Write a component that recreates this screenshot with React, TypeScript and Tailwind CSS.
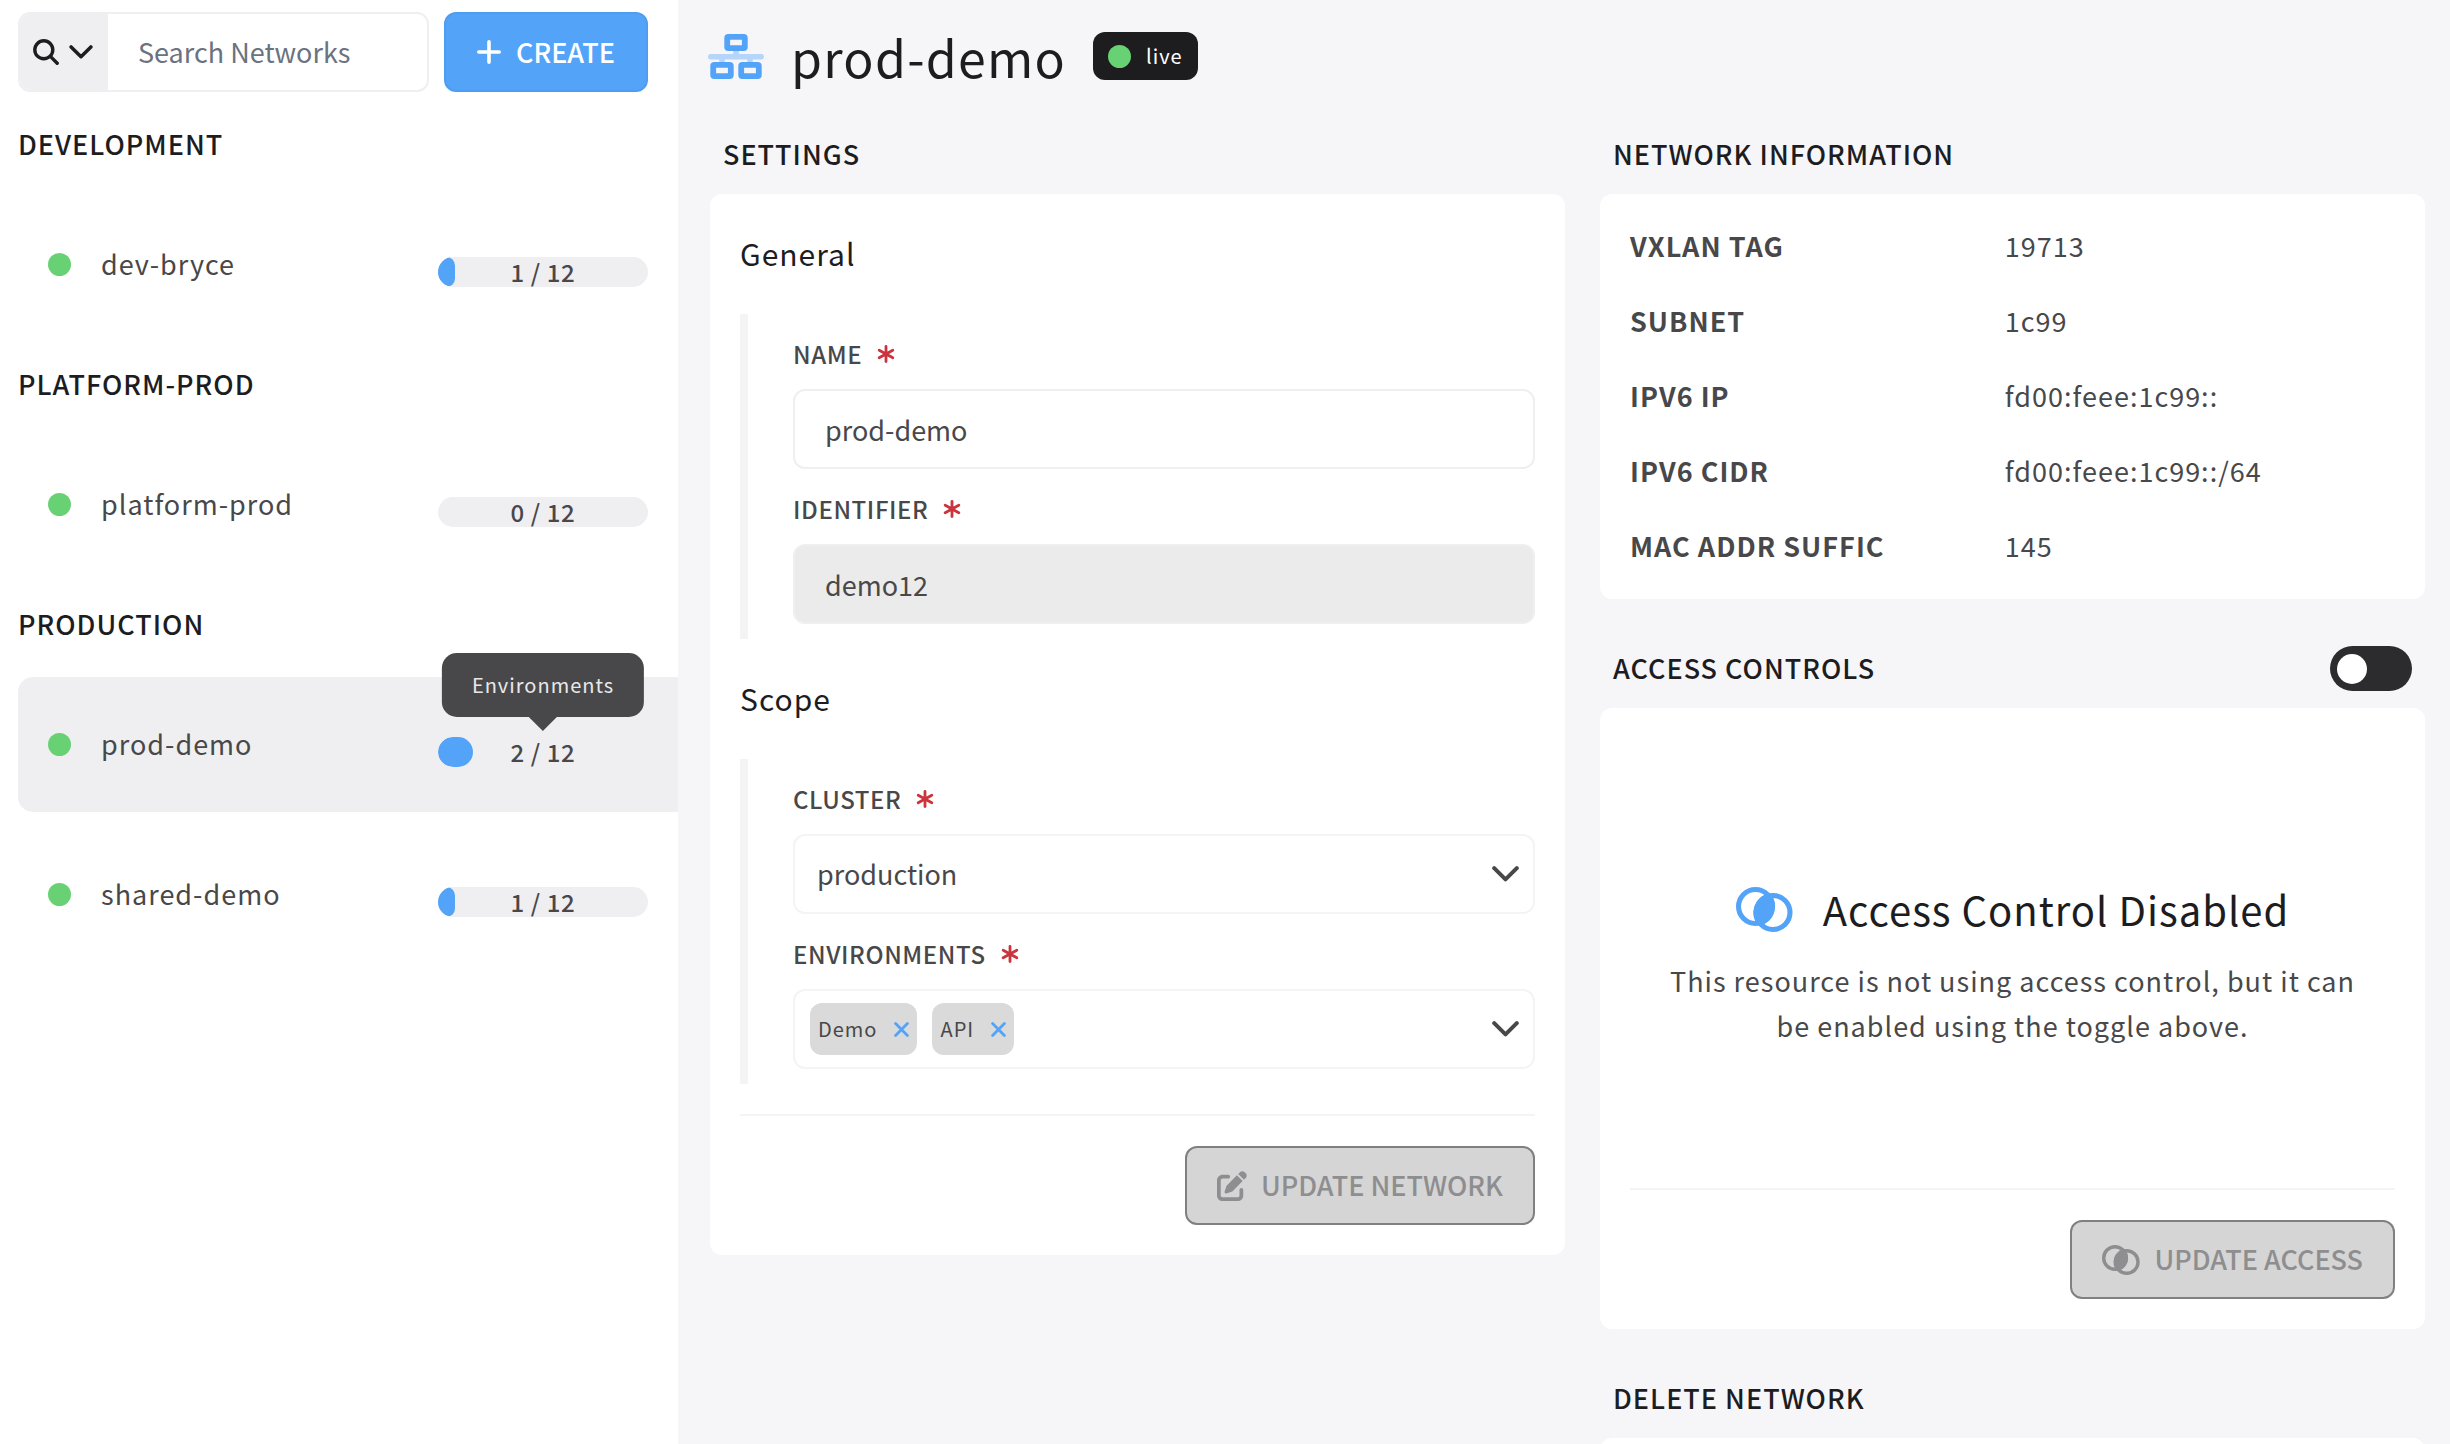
import { useState } from "react";
import type { ReactNode } from "react";
import { FaPenToSquare } from "react-icons/fa6";

interface Network {
    name: string
    used: number
    tooltip?: string
}

const MAX_ENVS = 12

const groups: { title: string, networks: Network[] }[] = [
    { title: "Development", networks: [{ name: "dev-bryce", used: 1 }] },
    { title: "Platform-Prod", networks: [{ name: "platform-prod", used: 0 }] },
    {
        title: "Production",
        networks: [
            { name: "prod-demo", used: 2, tooltip: "Environments" },
            { name: "shared-demo", used: 1 }
        ]
    }
]

const info = [
    ["VXLAN Tag", "19713"],
    ["Subnet", "1c99"],
    ["IPv6 IP", "fd00:feee:1c99::"],
    ["IPv6 CIDR", "fd00:feee:1c99::/64"],
    ["MAC Addr Suffic", "145"]
]

// icons
const SearchIcon = () => <svg className="size-[26px]" viewBox="0 0 26 26" fill="none" stroke="currentColor" strokeWidth="3.4" strokeLinecap="round">
    <circle cx="10.8" cy="10.8" r="9" />
    <path d="M17.4 17.4 24.2 24.2" />
</svg>

const ChevronIcon = ({ className }: { className: string }) => <svg className={className} viewBox="0 0 27 16" fill="none" stroke="currentColor" strokeWidth="4" strokeLinecap="round" strokeLinejoin="round">
    <path d="M2.2 2.2 13.5 13.4 24.8 2.2" />
</svg>

const PlusIcon = () => <svg className="size-[24px]" viewBox="0 0 24 24" fill="none" stroke="currentColor" strokeWidth="3.6" strokeLinecap="round">
    <path d="M12 1.8v20.4M1.8 12h20.4" />
</svg>

const CloseIcon = () => <svg className="size-[15px]" viewBox="0 0 15 15" fill="none" stroke="currentColor" strokeWidth="2.8" strokeLinecap="round">
    <path d="M1.6 1.6 13.4 13.4M13.4 1.6 1.6 13.4" />
</svg>

const RequiredIcon = () => <svg className="size-[18px] text-[#cb343c]" viewBox="0 0 18 18" fill="none" stroke="currentColor" strokeWidth="2.8" strokeLinecap="round">
    <path d="M9 1.4v15.2M2.2 5.2l13.6 7.6M15.8 5.2 2.2 12.8" />
</svg>

const NetworkIcon = () => <svg className="h-[45px] w-[56px] shrink-0" viewBox="0 0 56 45" fill="none">
    <path d="M2.8 22.7h50.4M28 15v8M14 22.7V30M42 22.7V30" stroke="#b5d6fa" strokeWidth="5.6" strokeLinecap="round" />
    <g stroke="#53a4f8" strokeWidth="5.8">
        <rect x="19.2" y="2.9" width="17.6" height="11.2" rx="1.2" />
        <rect x="5.2" y="30.9" width="17.6" height="11.2" rx="1.2" />
        <rect x="33.2" y="30.9" width="17.6" height="11.2" rx="1.2" />
    </g>
</svg>

const AccessIcon = ({ className }: { className: string }) => <svg className={className} viewBox="0 0 38 30" fill="none">
    <circle cx="13" cy="13" r="11.3" stroke="currentColor" strokeWidth="3.4" />
    <circle cx="24.7" cy="17" r="11.3" stroke="currentColor" strokeWidth="3.4" />
    <path d="M22.54 4.17A13 13 0 0 1 15.12 25.83 13 13 0 0 1 22.54 4.17Z" fill="currentColor" />
</svg>

const Dot = () => <span className="size-[23px] shrink-0 rounded-full bg-[#67d173]" />

const UsageBar = ({ used, tooltip }: { used: number, tooltip?: string }) => <div className="relative mt-[15px] grid w-[210px] items-center">
    <div className="col-start-1 row-start-1 h-[30px] overflow-hidden rounded-full bg-[#efeff1]">
        <div className="h-full rounded-full bg-[#53a4f8]" style={{ width: `${used / MAX_ENVS * 100}%` }} />
    </div>
    <span className="z-10 col-start-1 row-start-1 text-center text-[24px] leading-[30px] font-medium tracking-wide">{`${used} / ${MAX_ENVS}`}</span>
    {tooltip && <div role="tooltip" className="absolute bottom-full left-1/2 z-20 mb-[20px] -translate-x-1/2 rounded-[15px] bg-[#48484a] px-[30px] text-[20px] leading-[64px] tracking-wider text-[#e8e8ea]">
        {tooltip}
        <svg className="absolute top-full left-1/2 h-[14px] w-[28px] -translate-x-1/2" viewBox="0 0 28 14">
            <path d="M0 0h28L14 14Z" fill="#48484a" />
        </svg>
    </div>}
</div>

const Sidebar = ({ active, onSelect }: { active: string, onSelect: (name: string) => void }) => <aside className="w-[678px] shrink-0 bg-white pt-3 pl-[18px]">
    <div className="flex gap-[15px] pr-[30px]">
        <div className="flex h-[80px] min-w-0 flex-1 overflow-hidden rounded-[12px] border-2 border-[#efeff1]">
            <button aria-label="Search type" className="flex w-[88px] shrink-0 items-center gap-[10px] bg-[#efeff1] pl-[13px] text-[#1d1d1f]">
                <SearchIcon />
                <ChevronIcon className="h-[14px] w-[24px]" />
            </button>
            <input type="search" aria-label="Search Networks" placeholder="Search Networks" className="min-w-0 flex-1 px-[30px] outline-none placeholder:text-[#6b7280]" />
        </div>
        <button className="flex h-[80px] items-center gap-[15px] rounded-[12px] border-2 border-[#4f9df0] bg-[#53a4f8] px-[31px] font-medium text-white uppercase">
            <PlusIcon />
            Create
        </button>
    </div>
    {groups.map(group => <section key={group.title}>
        <h2 className="pt-[29px] pb-[31px] leading-[45px] font-medium tracking-[1px] text-[#1d1d1f] uppercase">{group.title}</h2>
        <ul className="flex flex-col gap-[15px]">
            {group.networks.map(network => <li key={network.name}>
                <a
                    href={`#${network.name}`}
                    onClick={() => onSelect(network.name)}
                    className={`flex h-[135px] items-center gap-[30px] rounded-l-[15px] px-[30px] ${active === network.name ? "bg-[#efeff1]" : ""}`}
                >
                    <Dot />
                    <span className="flex-1 tracking-[1px]">{network.name}</span>
                    <UsageBar used={network.used} tooltip={network.tooltip} />
                </a>
            </li>)}
        </ul>
    </section>)}
</aside>

const SectionTitle = ({ title, children }: { title: string, children?: ReactNode }) => <div className="flex items-center justify-between px-[13px] py-[17px]">
    <h2 className="pb-[2px] leading-[43px] font-medium tracking-[1px] text-[#1d1d1f] uppercase">{title}</h2>
    {children}
</div>

const Fieldset = ({ title, children }: { title: string, children: ReactNode }) => <section>
    <h3 className="pt-[29px] pb-[31px] text-[30px] leading-[60px] tracking-[1px] text-[#1d1d1f]">{title}</h3>
    <div className="border-l-8 border-[#f4f4f5] pb-[15px] pl-[45px]">{children}</div>
</section>

const Field = ({ id, label, children }: { id: string, label: string, children: ReactNode }) => <div>
    <label htmlFor={id} className="flex items-center gap-[15px] pt-[23px] pb-[19px] text-[24px] leading-[33px] font-medium tracking-wide uppercase">
        {label}
        <RequiredIcon />
    </label>
    {children}
</div>

const DisabledButton = ({ children }: { children: ReactNode }) => <button disabled className="flex h-[79px] items-center gap-[14px] rounded-[12px] border-2 border-[#808082] bg-[#d5d5d5] px-[30px] font-medium text-[#8e8e90] uppercase">
    {children}
</button>

const SettingsCard = () => {
    const [name, setName] = useState("prod-demo")
    const [envs, setEnvs] = useState(["Demo", "API"])

    return <form className="rounded-[12px] bg-white px-[30px] pb-[30px]">
        <Fieldset title="General">
            <Field id="name" label="Name">
                <input id="name" value={name} onChange={e => setName(e.target.value)} className="h-[80px] w-full rounded-[12px] border-2 border-[#efeff0] px-[30px] outline-none" />
            </Field>
            <Field id="identifier" label="Identifier">
                <input id="identifier" value="demo12" disabled className="h-[80px] w-full rounded-[12px] border-2 border-[#efeff0] bg-[#ebebeb] px-[30px]" />
            </Field>
        </Fieldset>
        <Fieldset title="Scope">
            <Field id="cluster" label="Cluster">
                <div className="grid items-center">
                    <select id="cluster" defaultValue="production" className="col-start-1 row-start-1 h-[80px] w-full appearance-none rounded-[12px] border-2 border-[#f4f4f5] bg-white px-[22px] outline-none">
                        <option value="production">production</option>
                        <option value="development">development</option>
                    </select>
                    <ChevronIcon className="pointer-events-none col-start-1 row-start-1 mr-[16px] h-[16px] w-[27px] justify-self-end" />
                </div>
            </Field>
            <Field id="environments" label="Environments">
                <div className="flex h-[80px] items-center gap-[15px] rounded-[12px] border-2 border-[#f4f4f5] pr-[14px] pl-[15px]">
                    {envs.map(env => <span key={env} className="flex h-[52px] items-center gap-[17px] rounded-[12px] bg-[#dadada] px-2 text-[20px] tracking-[1px]">
                        {env}
                        <button type="button" aria-label={`Remove ${env}`} className="text-[#53a4f8]" onClick={() => setEnvs(envs.filter(el => el !== env))}>
                            <CloseIcon />
                        </button>
                    </span>)}
                    <input id="environments" className="min-w-0 flex-1 outline-none" />
                    <button type="button" aria-label="Show environments">
                        <ChevronIcon className="h-[16px] w-[27px]" />
                    </button>
                </div>
            </Field>
        </Fieldset>
        <div className="mt-[30px] flex justify-end border-t-2 border-[#f4f4f5] pt-[30px]">
            <DisabledButton>
                <FaPenToSquare className="size-[30px]" />
                Update Network
            </DisabledButton>
        </div>
    </form>
}

const InfoCard = () => <div className="rounded-[12px] bg-white px-[30px] pt-[14px] pb-[16px]">
    <table className="w-full table-fixed text-left tracking-[1px]">
        <tbody>
            {info.map(([label, value]) => <tr key={label}>
                <th scope="row" className="w-[49%] leading-[75px] font-bold uppercase">{label}</th>
                <td className="leading-[75px]">{value}</td>
            </tr>)}
        </tbody>
    </table>
</div>

const AccessCard = () => <div className="rounded-[12px] bg-white px-[30px] pb-[30px]">
    <div className="px-[30px] pt-[171px] pb-[140px] text-center">
        <div className="flex items-center justify-center gap-[30px]">
            <AccessIcon className="h-[45px] w-[57px] text-[#53a4f8]" />
            <h3 className="text-[40px] leading-[60px] tracking-[1px] text-[#1d1d1f]">Access Control Disabled</h3>
        </div>
        <p className="mt-[19px] leading-[45px] tracking-[1px]">This resource is not using access control, but it can be enabled using the toggle above.</p>
    </div>
    <div className="flex justify-end border-t-2 border-[#f4f4f5] pt-[30px]">
        <DisabledButton>
            <AccessIcon className="h-[30px] w-[38px]" />
            Update Access
        </DisabledButton>
    </div>
</div>

export default function App() {
    const [active, setActive] = useState("prod-demo")
    const [access, setAccess] = useState(false)

    return <div className="flex h-screen overflow-hidden bg-[#f6f6f9] font-['Noto_Sans_CJK_SC','Open_Sans',sans-serif] text-[27px] text-[#48484a]">
        <Sidebar active={active} onSelect={setActive} />
        <main className="min-w-0 flex-1 pr-[25px] pl-[30px]">
            <header className="flex h-[115px] items-center gap-[27px] pb-[3px]">
                <NetworkIcon />
                <h1 className="text-[50px] leading-[75px] tracking-wide text-[#1d1d1f]">{active}</h1>
                <span className="flex h-[48px] items-center gap-[15px] rounded-[12px] bg-[#1d1d1f] px-[15px] text-[20px] tracking-[1px] text-white">
                    <Dot />
                    live
                </span>
            </header>
            <div className="grid grid-cols-[57fr_55fr] items-start gap-[35px] pl-[2px]">
                <section>
                    <SectionTitle title="Settings" />
                    <SettingsCard />
                </section>
                <div className="flex flex-col gap-[30px]">
                    <section>
                        <SectionTitle title="Network Information" />
                        <InfoCard />
                    </section>
                    <section>
                        <SectionTitle title="Access Controls">
                            <input
                                type="checkbox"
                                role="switch"
                                aria-label="Access Controls"
                                checked={access}
                                onChange={e => setAccess(e.target.checked)}
                                className="flex h-[45px] w-[82px] appearance-none items-center rounded-full bg-[#2c2c2e] px-[7px] before:size-[30px] before:rounded-full before:bg-white checked:justify-end"
                            />
                        </SectionTitle>
                        <AccessCard />
                    </section>
                    <section>
                        <SectionTitle title="Delete Network" />
                        <div className="h-[200px] rounded-[12px] bg-white" />
                    </section>
                </div>
            </div>
        </main>
    </div>
}
